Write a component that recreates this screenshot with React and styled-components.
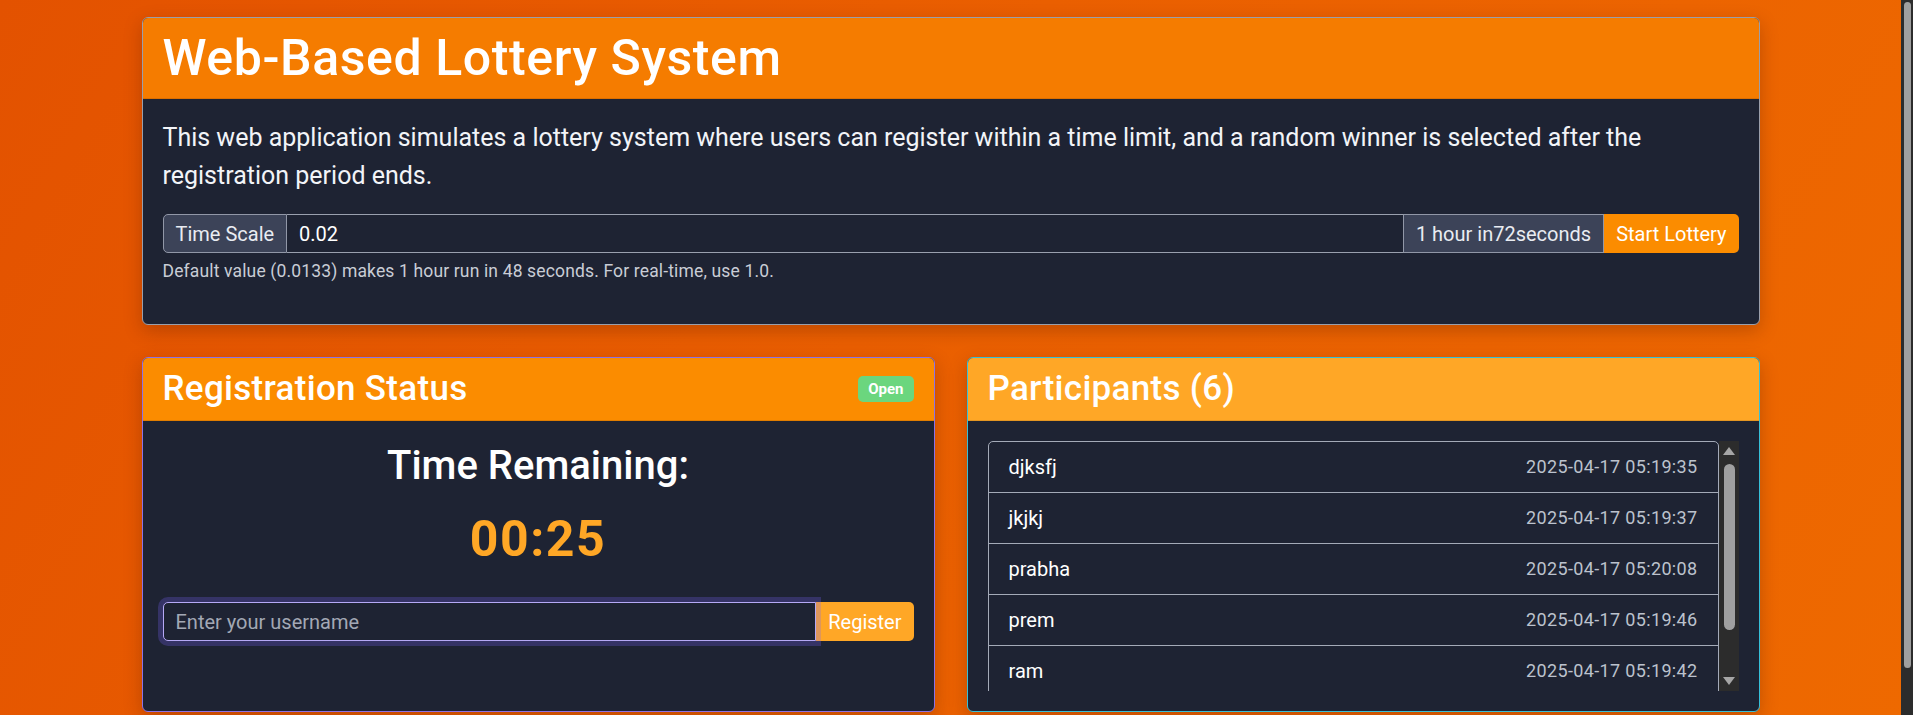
import React from "react";
import styled, { createGlobalStyle } from "styled-components";

const GlobalStyle = createGlobalStyle`
  html { color-scheme: dark; }
  body {
    margin: 0;
    font-family: Roboto, "Liberation Sans", Arial, sans-serif;
    color: #fff;
    background: linear-gradient(120deg, #e35200 0%, #ea5f00 45%, #ee6900 100%);
    background-attachment: fixed;
  }
  * { box-sizing: border-box; }
`;

const Shell = styled.div`
  margin-right: 12px;
`;

const Page = styled.div`
  max-width: 1618px;
  margin: 0 auto;
  padding: 17px 0 65px;
`;

const PageScrollbar = styled.div`
  position: fixed;
  top: 0;
  right: 0;
  width: 12px;
  height: 100vh;
  background: #2c2c2c;
  padding: 2px 2px 0 3px;
`;

const PageThumb = styled.div`
  height: 666px;
  background: #9f9f9f;
  border-radius: 4px;
`;

const Card = styled.section`
  background: #1e2333;
  border: 1px solid ${(p) => p.$border};
  border-radius: 6px;
  overflow: hidden;
  box-shadow: 0 6px 18px rgba(80, 20, 0, 0.28);
  display: flex;
  flex-direction: column;
`;

const CardHeader = styled.header`
  background: ${(p) => p.$bg};
  padding: 10px 20px;
  border-bottom: 1px solid rgba(0, 0, 0, 0.1);
  display: flex;
  align-items: center;
  justify-content: space-between;
`;

const Title = styled.h1`
  margin: 0;
  font-size: 50px;
  line-height: 60px;
  font-weight: 500;
  letter-spacing: 0.6px;
  color: #fff;
`;

const SubTitle = styled.h3`
  margin: 0;
  font-size: 35px;
  line-height: 42px;
  font-weight: 500;
  letter-spacing: 0.3px;
  color: #fff;
`;

const CardBody = styled.div`
  padding: 20px;
  flex: 1;
`;

const Lead = styled.p`
  margin: 0 0 20px;
  font-size: 25px;
  line-height: 37.5px;
  font-weight: 400;
  color: #f2f4f8;
`;

const Field = styled.div`
  margin-bottom: 20px;
`;

const InputGroup = styled.div`
  display: flex;
  height: 39px;
  position: relative;
`;

const Addon = styled.span`
  display: flex;
  align-items: center;
  padding: 0 12px;
  background: #3c4358;
  border: 1px solid #9197a7;
  color: #e9ecf2;
  font-size: 20px;
  white-space: nowrap;
  ${(p) => p.$first && "border-radius: 5px 0 0 5px;"}
`;

const TextInput = styled.input`
  flex: 1;
  min-width: 0;
  height: 100%;
  background: #1e2333;
  border: 1px solid #9aa0ae;
  border-left-width: ${(p) => (p.$joined ? 0 : 1)}px;
  border-right-width: ${(p) => (p.$joined ? 0 : 1)}px;
  color: #fff;
  font-family: inherit;
  font-size: 20px;
  padding: 0 12px;
  outline: none;
  ${(p) => p.$rounded && "border-radius: 5px 0 0 5px;"}
  ${(p) =>
    p.$focused &&
    `
    position: relative;
    z-index: 2;
    border-color: #b6a9f6;
    box-shadow: 0 0 0 5px rgba(125, 100, 255, 0.25);
  `}
  &::placeholder { color: #a3a8b5; }
`;

const Button = styled.button`
  border: 0;
  background: ${(p) => p.$bg};
  color: #fff;
  font-family: inherit;
  font-size: 20px;
  padding: 0 12px;
  border-radius: 0 5px 5px 0;
  cursor: pointer;
  white-space: nowrap;
`;

const Help = styled.div`
  margin-top: 5px;
  font-size: 17.5px;
  line-height: 26.25px;
  letter-spacing: 0.15px;
  color: #c9cdd6;
`;

const Row = styled.div`
  display: grid;
  grid-template-columns: 1fr 1fr;
  gap: 32px;
  margin-top: 32px;
`;

const Badge = styled.span`
  background: #6bd67e;
  color: #fff;
  font-weight: 700;
  font-size: 15px;
  line-height: 15px;
  padding: 5.5px 10px;
  border-radius: 5px;
`;

const Center = styled.div`
  text-align: center;
`;

const TimeLabel = styled.h2`
  margin: 1px 0 19px;
  font-size: 40px;
  line-height: 48px;
  font-weight: 500;
  color: #fff;
`;

const Timer = styled.div`
  font-size: 50px;
  line-height: 60px;
  font-weight: 700;
  letter-spacing: 1.5px;
  color: #ffa726;
  margin-bottom: 33px;
`;

const ListFrame = styled.div`
  display: flex;
  height: 250px;
`;

const ListViewport = styled.div`
  flex: 1;
  min-width: 0;
  overflow: hidden;
`;

const List = styled.ul`
  list-style: none;
  margin: 0;
  padding: 0;
  border: 1px solid #a4aab8;
  border-radius: 5px 5px 0 0;
`;

const Item = styled.li`
  display: flex;
  justify-content: space-between;
  align-items: center;
  height: 50px;
  padding: 0 20px;
  font-size: 20px;
  line-height: 30px;
  color: #fff;
  & + & { border-top: 1px solid #a4aab8; height: 51px; }
`;

const Stamp = styled.small`
  font-size: 18px;
  letter-spacing: 0.35px;
  color: #bcc2cd;
`;

const Track = styled.div`
  width: 20px;
  background: #2c2c2c;
  display: flex;
  flex-direction: column;
  align-items: center;
`;

const Arrow = styled.div`
  height: 20px;
  width: 100%;
  display: flex;
  align-items: center;
  justify-content: center;
`;

const Thumb = styled.div`
  width: 11px;
  height: 166px;
  margin: 3px 0 0 2px;
  background: #a0a0a0;
  border-radius: 6px;
`;

const Spacer = styled.div`
  flex: 1;
`;

const Tri = ({ down }) => (
  <svg width="12" height="8" viewBox="0 0 12 8">
    <path d={down ? "M0 0 H12 L6 8 Z" : "M6 0 L12 8 H0 Z"} fill="#a6a6a6" />
  </svg>
);

const participants = [
  ["djksfj", "2025-04-17 05:19:35"],
  ["jkjkj", "2025-04-17 05:19:37"],
  ["prabha", "2025-04-17 05:20:08"],
  ["prem", "2025-04-17 05:19:46"],
  ["ram", "2025-04-17 05:19:42"],
  ["sita", "2025-04-17 05:19:51"],
];

export default function App() {
  return (
    <>
      <GlobalStyle />
      <Shell>
        <Page>
          <Card $border="#9a9eaa">
            <CardHeader $bg="#f57c00">
              <Title>Web-Based Lottery System</Title>
            </CardHeader>
            <CardBody>
              <Lead>
                This web application simulates a lottery system where users can register within a time
                limit, and a random winner is selected after the registration period ends.
              </Lead>
              <Field>
                <InputGroup>
                  <Addon $first>Time Scale</Addon>
                  <TextInput $joined defaultValue="0.02" />
                  <Addon>1 hour in72seconds</Addon>
                  <Button $bg="#fb8c00">Start Lottery</Button>
                </InputGroup>
                <Help>Default value (0.0133) makes 1 hour run in 48 seconds. For real-time, use 1.0.</Help>
              </Field>
            </CardBody>
          </Card>

          <Row>
            <Card $border="#8c72e6">
              <CardHeader $bg="#fb8c00">
                <SubTitle>Registration Status</SubTitle>
                <Badge>Open</Badge>
              </CardHeader>
              <CardBody>
                <Center>
                  <TimeLabel>Time Remaining:</TimeLabel>
                  <Timer>00:25</Timer>
                </Center>
                <InputGroup>
                  <TextInput $rounded $focused placeholder="Enter your username" />
                  <Button $bg="#ffa726">Register</Button>
                </InputGroup>
              </CardBody>
            </Card>

            <Card $border="#36bfd8">
              <CardHeader $bg="#ffa726">
                <SubTitle>Participants (6)</SubTitle>
              </CardHeader>
              <CardBody>
                <ListFrame>
                  <ListViewport>
                    <List>
                      {participants.map(([name, time]) => (
                        <Item key={name}>
                          <span>{name}</span>
                          <Stamp>{time}</Stamp>
                        </Item>
                      ))}
                    </List>
                  </ListViewport>
                  <Track>
                    <Arrow><Tri /></Arrow>
                    <Thumb />
                    <Spacer />
                    <Arrow><Tri down /></Arrow>
                  </Track>
                </ListFrame>
              </CardBody>
            </Card>
          </Row>
        </Page>
      </Shell>
      <PageScrollbar>
        <PageThumb />
      </PageScrollbar>
    </>
  );
}
